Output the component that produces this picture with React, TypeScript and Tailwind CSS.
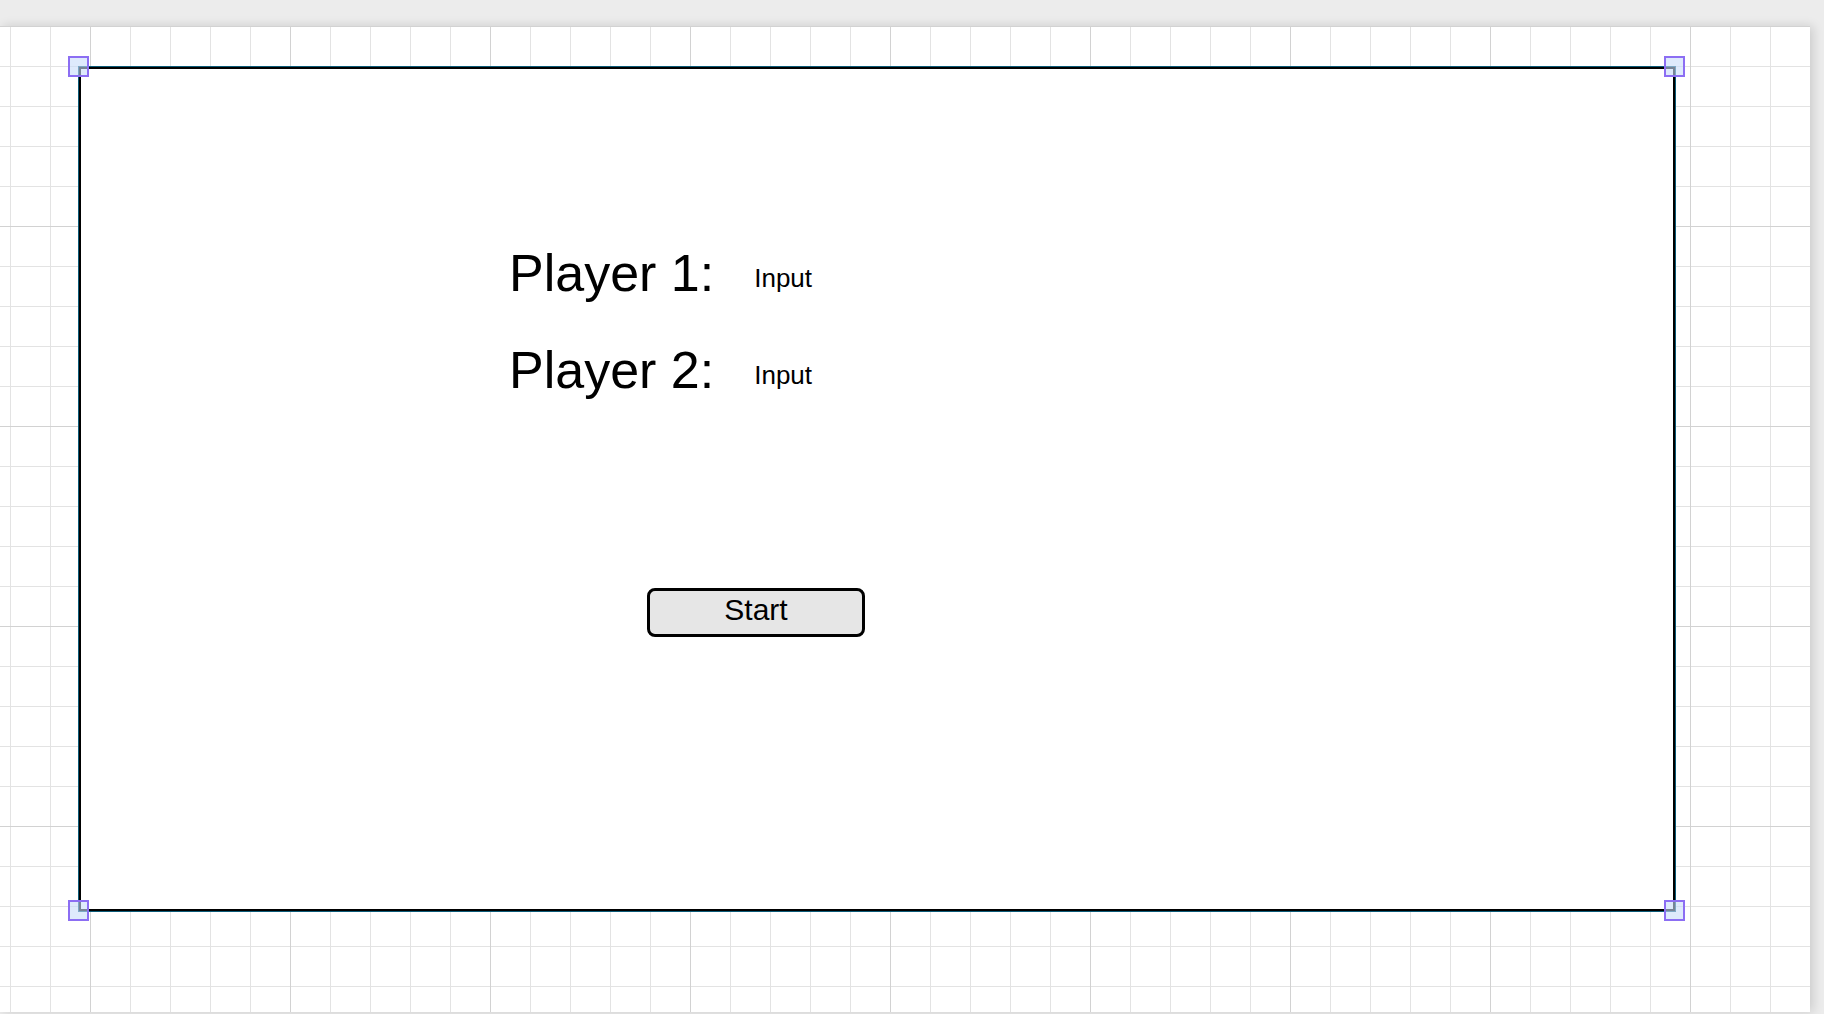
import React from "react";

function Handle({ className }: { className: string }) {
  return (
    <div
      className={
        "absolute w-[21px] h-[21px] border-2 border-[#8c6ef3] bg-[rgba(200,220,250,0.6)] " +
        className
      }
    />
  );
}

export default function App() {
  return (
    <div className="w-[1824px] h-[1014px] bg-[#ececec] flex flex-col overflow-hidden font-['Liberation_Sans',Arial,sans-serif] text-black">
      <div className="h-[26px] shrink-0" />
      <div className="flex">
        <div className="relative w-[1810px] h-[986px] bg-white shadow-[3px_0_10px_rgba(0,0,0,0.14)] bg-[image:linear-gradient(to_right,#d2d2d2_1px,transparent_1px),linear-gradient(to_bottom,#d2d2d2_1px,transparent_1px),linear-gradient(to_right,#e3e3e3_1px,transparent_1px),linear-gradient(to_bottom,#e3e3e3_1px,transparent_1px)] bg-[size:200px_200px,200px_200px,40px_40px,40px_40px] bg-[position:90px_0,0_0,10px_0,0_0]">
          <div className="absolute left-[79px] top-[41px] w-[1596px] h-[844px] border-2 border-black outline-1 outline-solid outline-[#0b5b78] bg-white flex flex-col items-start pl-[428px] pt-[178px]">
            <div className="flex items-start gap-[40px]">
              <span className="text-[52px] leading-none">Player 1:</span>
              <span className="text-[26px] leading-none mt-[18px]">Input</span>
            </div>
            <div className="flex items-start gap-[40px] mt-[45px]">
              <span className="text-[52px] leading-none">Player 2:</span>
              <span className="text-[26px] leading-none mt-[18px]">Input</span>
            </div>
            <button className="mt-[192px] ml-[138px] w-[218px] h-[49px] border-[3px] border-black rounded-[8px] bg-[#e6e6e6] flex justify-center items-start pt-[4px] text-[30px] leading-none">
              Start
            </button>
          </div>
          <Handle className="left-[68px] top-[30px]" />
          <Handle className="left-[1664px] top-[30px]" />
          <Handle className="left-[68px] top-[874px]" />
          <Handle className="left-[1664px] top-[874px]" />
        </div>
      </div>
    </div>
  );
}
